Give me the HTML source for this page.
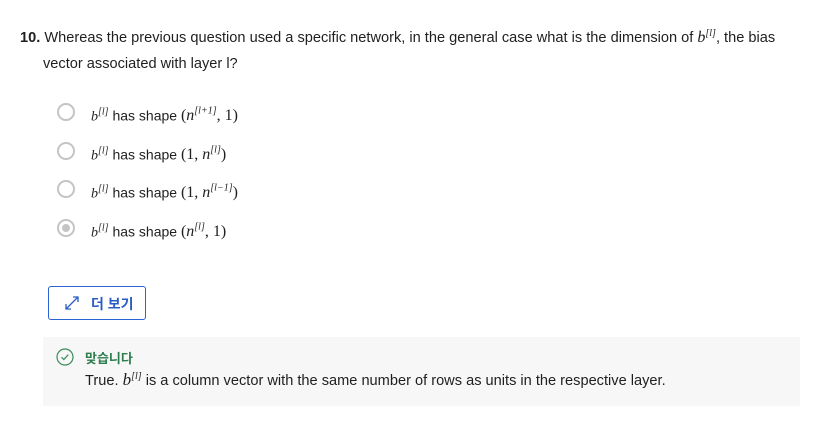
<!DOCTYPE html>
<html><head><style>
body{margin:0;width:836px;height:436px;background:#fff;font-family:"Liberation Sans","Noto Sans CJK KR",sans-serif;color:#1f1f1f;position:relative;overflow:hidden}
.q{position:absolute;left:20px;top:21px;font-size:14.6px;line-height:26px;width:800px}
.m{font-family:"Liberation Serif",serif;font-style:italic;font-size:16px}
.r{font-family:"Liberation Serif",serif;font-size:16px}
sup{font-size:10px;font-family:"Liberation Serif",serif;font-style:italic}
.opt{position:absolute;left:57px;font-size:14px;height:22px;line-height:22px}
.rad{position:absolute;left:0;top:2px;width:18px;height:18px;border:2px solid #c4c4c4;border-radius:50%;box-sizing:border-box}
.rad.s::after{content:"";position:absolute;left:3px;top:3px;width:8px;height:8px;border-radius:50%;background:#c4c4c4}
.ot{position:absolute;left:34px;top:0;white-space:nowrap}
.btn{position:absolute;left:48px;top:286px;width:98px;height:34px;border:1px solid #2a63d4;border-radius:3px;box-sizing:border-box;color:#2a5cc4;font-size:14px;font-weight:bold}
.fb{position:absolute;left:43px;top:337px;width:757px;height:69px;background:#f6f7f6}
</style></head><body>
<div class="q"><b>10.</b> Whereas the previous question used a specific network, in the general case what is the dimension of <span class="m">b</span><sup>[l]</sup>, the bias<br><span style="padding-left:23px">vector associated with layer l?</span></div>

<div class="opt" style="top:101px"><div class="rad"></div><div class="ot"><span class="m" style="font-size:14px">b</span><sup>[l]</sup> has shape <span class="r">(<i>n</i><sup>[l+1]</sup>, 1)</span></div></div>
<div class="opt" style="top:140px"><div class="rad"></div><div class="ot"><span class="m" style="font-size:14px">b</span><sup>[l]</sup> has shape <span class="r">(1, <i>n</i><sup>[l]</sup>)</span></div></div>
<div class="opt" style="top:178px"><div class="rad"></div><div class="ot"><span class="m" style="font-size:14px">b</span><sup>[l]</sup> has shape <span class="r">(1, <i>n</i><sup>[l−1]</sup>)</span></div></div>
<div class="opt" style="top:217px"><div class="rad s"></div><div class="ot"><span class="m" style="font-size:14px">b</span><sup>[l]</sup> has shape <span class="r">(<i>n</i><sup>[l]</sup>, 1)</span></div></div>

<div class="btn">
<svg style="position:absolute;left:15px;top:8px" width="16" height="16" viewBox="0 0 16 16" fill="none" stroke="#2a5cc4" stroke-width="1.3"><path d="M2 14L14 2M9 2h5v5M2 9v5h5"/></svg>
<span style="position:absolute;left:42px;top:7px">더 보기</span></div>

<div class="fb">
<svg style="position:absolute;left:13px;top:11px" width="18" height="18" viewBox="0 0 18 18" fill="none" stroke="#3b8a5a" stroke-width="1.2"><circle cx="9" cy="9" r="8"/><path d="M5.5 9.2l2.3 2.3 4.5-4.8"/></svg>
<span style="position:absolute;left:42px;top:11px;color:#2e7d4f;font-weight:bold;font-size:13px">맞습니다</span>
<span style="position:absolute;left:42px;top:33px;font-size:14.6px;white-space:nowrap">True. <span class="m" style="font-size:17px">b</span><sup>[l]</sup> is a column vector with the same number of rows as units in the respective layer.</span>
</div>
</body></html>
